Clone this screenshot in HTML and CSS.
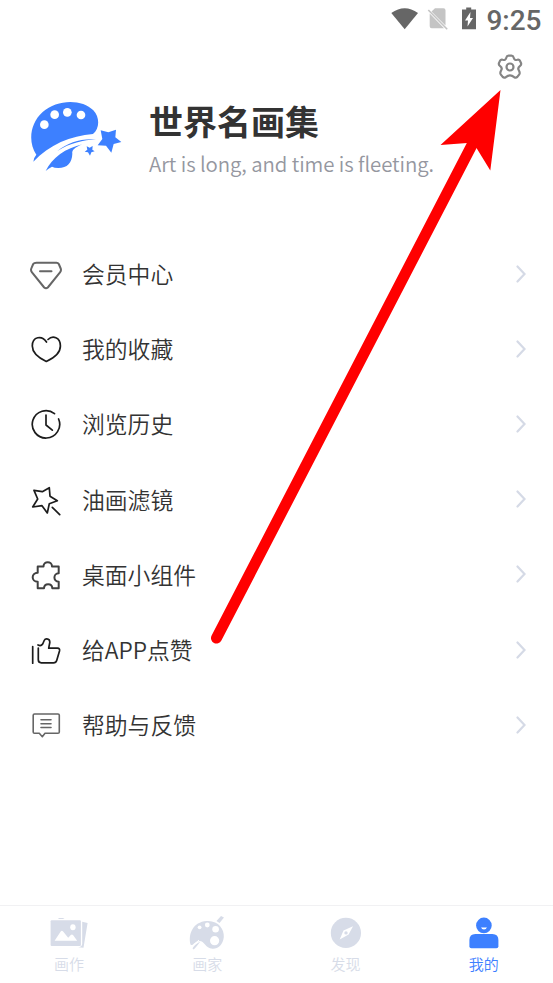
FILE: index.html
```html
<!DOCTYPE html>
<html lang="zh-CN">
<head>
<meta charset="utf-8">
<title>世界名画集</title>
<link rel="stylesheet" href="styles.css">
</head>
<body>
<div class="app">
  <header class="status">
    <svg width="86" height="24" viewBox="391 7 86 24">
      <path d="M391.3 13Q404.7 3.5 418 13L404.7 29.3Z" fill="#666"/>
      <path d="M435 8.300H443.500Q445.500 8.300 445.500 10.300V25.500L431.500 11.500ZM429.700 13.500L444 28.300H431.700Q429.700 28.300 429.700 26.300Z" fill="#c4c4c4"/>
      <path d="M428.300 10L447.200 29.300" stroke="#c4c4c4" stroke-width="1.600"/>
      <path d="M466.200 7.500h5v2h4.800v19.800h-14V9.500h4.200Z" fill="#666"/>
      <path d="M470.500 12L465 20.500h3L467.500 26.500L473 18h-3Z" fill="#fff"/>
    </svg>
    <span class="time">9:25</span>
  </header>
  <div class="tools">
    <svg width="26" height="26" viewBox="-13 -13 26 26" fill="none" stroke="#858585" stroke-width="2.200" stroke-linejoin="round">
      <path d="M-3.600-9.600Q-3.200-11.300-1.500-11.300H1.500Q3.200-11.300 3.600-9.600Q4.200-6.300 7.300-7.200Q9-7.900 9.900-6.400L11.100-3.700Q11.500-2.200 10.100-1.200Q7.200 .8 8.900 3.500Q10.200 5.800 9.300 7.300L7.300 9.900Q6 11.200 4.200 10.200Q0 6.500-4.200 10.200Q-6 11.200-7.300 9.900L-9.300 7.300Q-10.200 5.800-8.900 3.500Q-7.200 .8-10.100-1.200Q-11.500-2.200-11.100-3.700L-9.900-6.400Q-9-7.900-7.300-7.200Q-4.200-6.300-3.600-9.600Z"/>
      <circle r="3.500"/>
    </svg>
  </div>
  <section class="profile">
    <svg width="94" height="74" viewBox="30 30 282 222" fill="#3d80ff">
      <path d="M49 194C24 157 29 101 68 66C111 27 186 26 220 61C241 84 238 116 219 132C153 137 87 164 40 215Q41 203 49 194Z"/>
      <path d="M112 183C145 157 180 145 228 148C190 151 150 159 112 183ZM77 243C96 204 137 174 188 163C165 172 155 180 157 191C156 218 142 234 115 234Q103 234 96 230Q85 235 77 243Z"/>
      <path d="M242 121L265 127L288 119L286 142L304 156L281 162L274 188L258 167L233 166L247 147Z"/>
      <path d="M200 169L209 173L218 168L217 179L224 184L214 187L210 197L204 187L194 185L202 179Z"/>
      <g fill="#fff"><circle cx="73" cy="104" r="13"/><circle cx="104" cy="74" r="13"/><circle cx="142" cy="67" r="13"/><circle cx="183" cy="75" r="13"/></g>
    </svg>
    <div class="names">
      <h1>世界名画集</h1>
      <p>Art is long, and time is fleeting.</p>
    </div>
  </section>
  <main class="menu">
    <div class="row">
      <svg class="icon gray" viewBox="0 0 32 32"><path d="M6.500 3.700H26.500Q28 3.700 28.800 5L30.700 9.500Q31.500 11.500 30 13.300L17.800 28.500Q16 30 14.200 28.500L2 13.300Q.5 11.500 1.300 9.500L3.200 5Q4 3.700 6.500 3.700ZM10 12.300H21.500"/></svg>
      <span>会员中心</span><svg class="chevron" viewBox="0 0 10 18"><path d="M1.500 1.500L8.500 9L1.500 16.500"/></svg>
    </div>
    <div class="row">
      <svg class="icon" viewBox="0 0 32 32"><path d="M16.500 8C12 1 2.300 2.300 2.300 12C2.300 19 9 24 16.300 27.500C24 24 30.400 19 30.400 12C30.400 3 22.500 1.200 18 5.500"/></svg>
      <span>我的收藏</span><svg class="chevron" viewBox="0 0 10 18"><path d="M1.500 1.500L8.500 9L1.500 16.500"/></svg>
    </div>
    <div class="row">
      <svg class="icon" viewBox="0 0 32 32"><path d="M24.500 4.600A13.700 13.700 0 1 0 28.600 10M16 6V16L22.300 21.200"/></svg>
      <span>浏览历史</span><svg class="chevron" viewBox="0 0 10 18"><path d="M1.500 1.500L8.500 9L1.500 16.500"/></svg>
    </div>
    <div class="row">
      <svg class="icon" viewBox="0 0 32 32"><path d="M4 5.300L12.300 6.700L19.300 2.700L20 11.200L27.300 15.800L19.300 18.700L17.300 28L12 20.700L2.700 22L7.700 14ZM22.300 22.300L29.700 29.700"/></svg>
      <span>油画滤镜</span><svg class="chevron" viewBox="0 0 10 18"><path d="M1.500 1.500L8.500 9L1.500 16.500"/></svg>
    </div>
    <div class="row">
      <svg class="icon dark" viewBox="0 0 32 32"><path d="M7.700 6.500H13.500C13.500 .8 22 .8 22 6.500H28.700V13.200C23 13.200 23 21.800 28.700 21.800V28.200H22.300C22 22.800 14.300 22.800 14 28.200H7.700V21.800C1 21.800 1 12.800 7.700 12.800Z"/></svg>
      <span>桌面小组件</span><svg class="chevron" viewBox="0 0 10 18"><path d="M1.500 1.500L8.500 9L1.500 16.500"/></svg>
    </div>
    <div class="row">
      <svg class="icon" viewBox="0 0 32 32"><path d="M2.700 11.500V28.200M8.300 13V24.800Q8.300 27.800 11.300 27.800H23.500Q26 27.800 26.700 25.500L29.500 16Q30.200 13.200 27.500 13.200H18.700L19.800 7.500Q20 4 16.800 3.800Q15 3.700 14.200 5.500L12.700 9Q11 11.500 8 10"/></svg>
      <span>给APP点赞</span><svg class="chevron" viewBox="0 0 10 18"><path d="M1.500 1.500L8.500 9L1.500 16.500"/></svg>
    </div>
    <div class="row">
      <svg class="icon gray thin" viewBox="0 0 32 32"><path d="M4.500 4H28Q29.300 4 29.300 5.300V22Q29.300 23.300 28 23.300H15L12.300 26.700L9.300 23.300H4.500Q3.200 23.300 3.200 22V5.300Q3.200 4 4.500 4ZM11 9.700H21M11 13.700H21M11 17.500H21"/></svg>
      <span>帮助与反馈</span><svg class="chevron" viewBox="0 0 10 18"><path d="M1.500 1.500L8.500 9L1.500 16.500"/></svg>
    </div>
  </main>
  <nav class="tabs">
    <div class="tab">
      <svg viewBox="0 0 40 36"><path d="M2.600 6.300H30.900Q31.900 6.300 31.900 7.300V31Q31.900 32 30.900 32H2.600Q1.600 32 1.600 31V7.300Q1.600 6.300 2.600 6.300Z"/><path d="M33.200 7.700L38.600 9L34.500 33.800L29 33.300Q33 33 33.200 30ZM9 5L10 4H14L15.500 5Z"/><g fill="#fff"><ellipse cx="23.900" cy="13.200" rx="2.700" ry="3"/><path d="M5.600 26.700L11.700 17.500Q12.900 16 14.100 17.500L19.200 23.700L21.800 21Q22.900 20 24 21L28.200 26.700Z"/></g></svg>
      <span>画作</span>
    </div>
    <div class="tab">
      <svg viewBox="0 0 40 36"><path d="M3.500 30.500C1 20 6 8 19.500 7C31 6 37.500 15 36.800 23C36 31 31 35 25.500 34.700C18 34 17.500 27 12.500 27Q9 27 7 29.500Q5 32 3.500 30.500Z"/><path d="M5.500 34.500Q7 31 13.300 27.500Q10.500 31.500 6.800 35.500ZM29.500 7L34 2L37 3.500L32.500 9Z"/><g fill="#fff"><circle cx="12.600" cy="13.300" r="1.900"/><circle cx="20.300" cy="11" r="2.400"/><circle cx="28.600" cy="15.300" r="3.300"/><circle cx="27.600" cy="26.700" r="4.600"/></g><path d="M4.500 33L12 26" stroke="#fff" stroke-width="1"/></svg>
      <span>画家</span>
    </div>
    <div class="tab">
      <svg viewBox="0 0 40 36"><circle cx="19.900" cy="18.900" r="15.100"/><path d="M27 12.300L22.600 20.500L13.700 25.500L17.500 16.500Z" fill="#fff"/><circle cx="20" cy="18.900" r="1.700"/></svg>
      <span>发现</span>
    </div>
    <div class="tab active">
      <svg viewBox="0 0 40 36"><circle cx="19.900" cy="11.400" r="7.800"/><path d="M11.400 20H28.400Q34.400 20 34.400 26V32.300Q34.400 34.300 32.400 34.300H7.400Q5.400 34.300 5.400 32.300V26Q5.400 20 11.400 20Z"/><path d="M17.200 13.200Q20 13.800 22.800 13.200Q22.500 15.600 20 15.600T17.200 13.200Z" fill="#fff"/></svg>
      <span>我的</span>
    </div>
  </nav>
  <svg class="pointer" viewBox="0 0 553 983"><path d="M216.500 638L473 143" stroke="#f00" stroke-width="11" stroke-linecap="round"/><path d="M500.500 90L440.500 145L467.300 143L476.500 148L490.300 170.500Z" fill="#f00"/></svg>
</div>
</body>
</html>
```
FILE: styles.css
```css
* { box-sizing: border-box; }
body { margin: 0; background: #fff; }
.app {
  position: relative;
  display: flex;
  flex-direction: column;
  width: 553px;
  height: 983px;
  overflow: hidden;
  font-family: "Noto Sans CJK SC", sans-serif;
  font-weight: 350;
  color: #333;
}
svg { display: block; flex: none; }
.status {
  display: flex;
  justify-content: flex-end;
  align-items: flex-start;
  gap: 10px;
  height: 40px;
  padding: 7px 11.500px 0 0;
}
.status svg { margin-right: -0.500px; }
.time { font: 500 28px/28px Roboto, sans-serif; color: #666; }
.tools { display: flex; justify-content: flex-end; height: 60px; padding: 14px 29.700px 0 0; }
.profile { display: flex; gap: 25px; height: 136px; padding-left: 30px; }
h1 { margin: 0; font-size: 34px; line-height: 42px; font-weight: 700; color: #333; }
p { margin: 5px 0 0; font-size: 20.400px; line-height: 32px; letter-spacing: -0.080px; color: #9597a0; }
.row { display: flex; align-items: center; height: 75.200px; padding: 0 27px 0 30px; }
.row span { flex: 1; padding: 1px 0 0 20px; font-size: 22.800px; line-height: 32px; }
.icon {
  width: 32px;
  height: 32px;
  margin-top: 3px;
  fill: none;
  stroke: #1c1c1c;
  stroke-width: 1.700;
  stroke-linecap: round;
  stroke-linejoin: round;
}
.dark { stroke: #404040; stroke-width: 2; }
.gray { stroke: #666; stroke-width: 2; }
.thin { stroke-width: 1.600; }
.chevron { width: 10px; height: 18px; fill: none; stroke: #d5dae6; stroke-width: 2.200; stroke-linecap: round; }
.tabs { display: flex; height: 78px; margin-top: auto; border-top: 1px solid #f1f1f3; }
.tab { flex: 1; display: flex; flex-direction: column; align-items: center; padding-top: 8px; color: #d7dce8; font-size: 15px; line-height: 22px; }
.tab svg { width: 40px; height: 36px; fill: currentColor; }
.tab span { margin-top: 3px; }
.active { color: #3d80ff; }
.pointer { position: absolute; inset: 0; width: 553px; height: 983px; }
```
